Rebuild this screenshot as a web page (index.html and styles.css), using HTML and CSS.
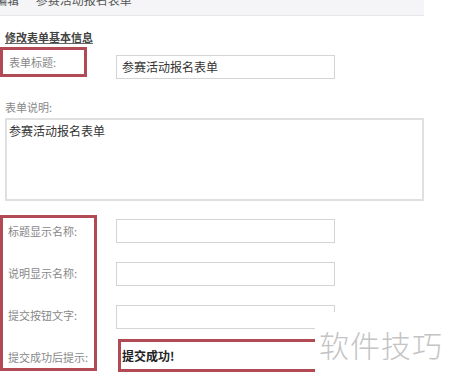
FILE: index.html
```html
<!DOCTYPE html>
<html>

	<head>
		<meta charset="UTF-8">
		<title>修改表单</title>
		<link rel="stylesheet" href="styles.css">
	</head>

	<body>
		<div id="crumb">
			<span class="first">编辑</span>
			<span>参赛活动报名表单</span>
		</div>

		<div id="main">
			<div class="tab">修改表单基本信息</div>

			<div class="row-title">
				<div class="mark mark-one">
					<label>表单标题:</label>
				</div>
				<div class="ipt ipt-title">参赛活动报名表单</div>
			</div>

			<div class="desc-label">表单说明:</div>
			<div class="area">参赛活动报名表单</div>

			<div class="group">
				<div class="mark mark-two">
					<label>标题显示名称:</label>
					<label>说明显示名称:</label>
					<label>提交按钮文字:</label>
					<label>提交成功后提示:</label>
				</div>
				<div class="ipts">
					<div class="ipt"></div>
					<div class="ipt"></div>
					<div class="ipt"></div>
					<div class="ipt ipt-done">提交成功!</div>
				</div>
			</div>
		</div>

		<div id="water">软件技巧</div>
	</body>

</html>
```

FILE: styles.css
```css
* {
	margin: 0;
	padding: 0;
	box-sizing: border-box;
}

body {
	width: 450px;
	height: 378px;
	overflow: hidden;
	position: relative;
	background: #fff;
	font-family: "Noto Sans CJK SC", "Microsoft YaHei", sans-serif;
	color: #888;
	font-size: 11px;
}

#crumb {
	width: 424px;
	height: 16px;
	line-height: 0;
	overflow: hidden;
	background: #f5f5f7;
	border-bottom: 1px solid #e8e8ea;
	font-size: 12px;
	color: #555;
}

#crumb span {
	display: inline-block;
	margin-left: 14px;
}

#crumb .first {
	margin-left: -5px;
}

#main {
	padding-top: 16px;
}

.tab {
	width: fit-content;
	margin-left: 5px;
	height: 12px;
	line-height: 10px;
	color: #444;
	font-weight: bold;
	border-bottom: 1px solid #666;
}

.row-title {
	display: flex;
	align-items: flex-start;
	margin-top: 3px;
}

.mark {
	border: 3px solid #b24a55;
}

.mark label {
	display: block;
	height: 14px;
	line-height: 14px;
	color: #888;
	white-space: nowrap;
}

.mark-one {
	width: 87px;
	height: 30px;
	padding: 5px 0 0 6px;
}

.ipt {
	width: 219px;
	height: 24px;
	border: 1px solid #d4d4d4;
	font-size: 12px;
	line-height: 22px;
	padding-left: 5px;
	color: #333;
}

.ipt-title {
	margin: 8px 0 0 29px;
}

.desc-label {
	margin: 21px 0 0 5px;
	height: 14px;
	line-height: 14px;
}

.area {
	width: 419px;
	height: 83px;
	margin: 4px 0 0 5px;
	border: 2px solid #e0e0e0;
	padding: 3px 0 0 2px;
	font-size: 12px;
	line-height: 16px;
	color: #333;
}

.group {
	display: flex;
	align-items: flex-start;
	margin-top: 14px;
}

.mark-two {
	width: 97px;
	height: 156px;
	padding: 6px 0 0 5px;
	display: flex;
	flex-direction: column;
	gap: 28px;
}

.ipts {
	margin: 4px 0 0 19px;
	display: flex;
	flex-direction: column;
	gap: 19px;
}

.ipt-done {
	width: 221px;
	height: 33px;
	margin: -9px 0 0 2px;
	border: 3px solid #b24a55;
	line-height: 27px;
	padding-left: 1px;
	font-weight: bold;
	color: #222;
}

#water {
	position: absolute;
	left: 315px;
	top: 312px;
	width: 135px;
	height: 66px;
	background: #fff;
	padding: 14px 0 0 4px;
	font-size: 30px;
	line-height: 36px;
	color: #c4c4c4;
	letter-spacing: 1px;
	font-weight: 300;
}
```
